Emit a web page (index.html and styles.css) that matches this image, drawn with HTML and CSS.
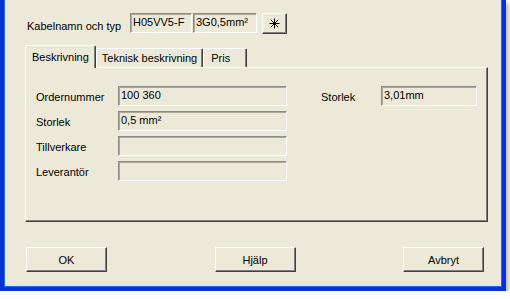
FILE: index.html
```html
<!DOCTYPE html>
<html>

<head>
    <title>Kabel</title>
    <link rel="stylesheet" href="styles.css">
</head>

<body>
    <div class="window">
        <div class="cable-row">
            <span class="cable-label">Kabelnamn och typ</span>
            <div class="field field-name">H05VV5-F</div>
            <div class="field field-type">3G0,5mm²</div>
            <button class="btn btn-star">
                <svg viewBox="0 0 11 11" width="11" height="11">
                    <path d="M5.5 0.5v10M0.5 5.5h10M1.8 1.8l7.4 7.4M9.2 1.8l-7.4 7.4" stroke="#000" stroke-width="1" fill="none" />
                </svg>
            </button>
        </div>

        <div class="tabs">
            <div class="tab tab-active">Beskrivning</div>
            <div class="tab">Teknisk beskrivning</div>
            <div class="tab tab-price">Pris</div>
        </div>

        <div class="tab-panel">
            <div class="info-grid">
                <span class="info-label">Ordernummer</span>
                <div class="field">100 360</div>
                <span class="info-label">Storlek</span>
                <div class="field">0,5 mm²</div>
                <span class="info-label">Tillverkare</span>
                <div class="field"></div>
                <span class="info-label">Leverantör</span>
                <div class="field"></div>
            </div>
            <div class="info-grid info-side">
                <span class="info-label">Storlek</span>
                <div class="field">3,01mm</div>
            </div>
        </div>

        <div class="button-row">
            <button class="btn btn-dialog">OK</button>
            <button class="btn btn-dialog">Hjälp</button>
            <button class="btn btn-dialog">Avbryt</button>
        </div>
    </div>
</body>

</html>
```

FILE: styles.css
```css
body {
    margin: 0;
    padding: 0;
    background: #ffffff;
    font-family: "Liberation Sans", Arial, sans-serif;
    font-size: 11px;
    color: #000;
}

.window {
    width: 506px;
    height: 291px;
    box-sizing: border-box;
    border: 4px solid #0831d9;
    border-top: 0;
    background: #ece9d8;
    padding: 13px 14px 0 21px;
    box-shadow: 2px 3px 5px rgba(0, 0, 0, 0.35), inset 0 -1px 0 #166aee, inset 1px 0 0 #166aee, inset -1px 0 0 #166aee;
}

.cable-row {
    display: flex;
    align-items: flex-start;
    height: 21px;
}

.cable-label {
    width: 103px;
    padding: 7px 0 0 2px;
    line-height: 13px;
}

.field {
    height: 20px;
    box-sizing: border-box;
    padding: 1px 2px 0 2px;
    line-height: 14px;
    border: 1px solid;
    border-color: #8c8c8c #ffffff #ffffff #8c8c8c;
    box-shadow: inset 1px 1px 0 #aca899;
    background: #ece9d8;
    white-space: nowrap;
}

.field-name {
    width: 62px;
    margin-right: 1px;
}

.field-type {
    width: 64px;
}

.btn {
    font-family: inherit;
    font-size: 11px;
    color: #000;
    background: #ece9d8;
    border: 1px solid;
    border-color: #ffffff #404040 #404040 #ffffff;
    box-shadow: inset -1px -1px 0 #808080;
    padding: 0;
    box-sizing: border-box;
    display: flex;
    align-items: center;
    justify-content: center;
}

.btn-star {
    width: 25px;
    height: 21px;
    margin-left: 5px;
}

.tabs {
    display: flex;
    align-items: flex-end;
    height: 22px;
    margin-top: 11px;
}

.tab {
    height: 19px;
    box-sizing: border-box;
    padding: 3px 5px 0 5px;
    border: 1px solid;
    border-bottom: 0;
    border-color: #ffffff #404040 transparent #ffffff;
    box-shadow: inset -1px 0 0 #808080;
    border-radius: 2px 2px 0 0;
    white-space: nowrap;
}

.tab-active {
    height: 23px;
    margin-bottom: -1px;
    padding: 5px 6px 0 6px;
    position: relative;
    z-index: 1;
    background: #ece9d8;
}

.tab-price {
    width: 44px;
    padding-left: 7px;
}

.tab-panel {
    display: flex;
    height: 155px;
    box-sizing: border-box;
    padding: 18px 0 0 10px;
    border: 1px solid;
    border-color: #ffffff #404040 #404040 #ffffff;
    box-shadow: inset -1px -1px 0 #808080;
}

.info-grid {
    display: grid;
    grid-template-columns: 82px 169px;
    grid-auto-rows: 20px;
    row-gap: 5px;
    align-items: start;
}

.info-label {
    padding-top: 5px;
    line-height: 13px;
}

.info-side {
    grid-template-columns: 60px 96px;
    margin-left: 34px;
}

.button-row {
    display: flex;
    justify-content: space-between;
    margin-top: 25px;
    padding: 0 4px 0 1px;
}

.btn-dialog {
    width: 81px;
    height: 25px;
}
```
